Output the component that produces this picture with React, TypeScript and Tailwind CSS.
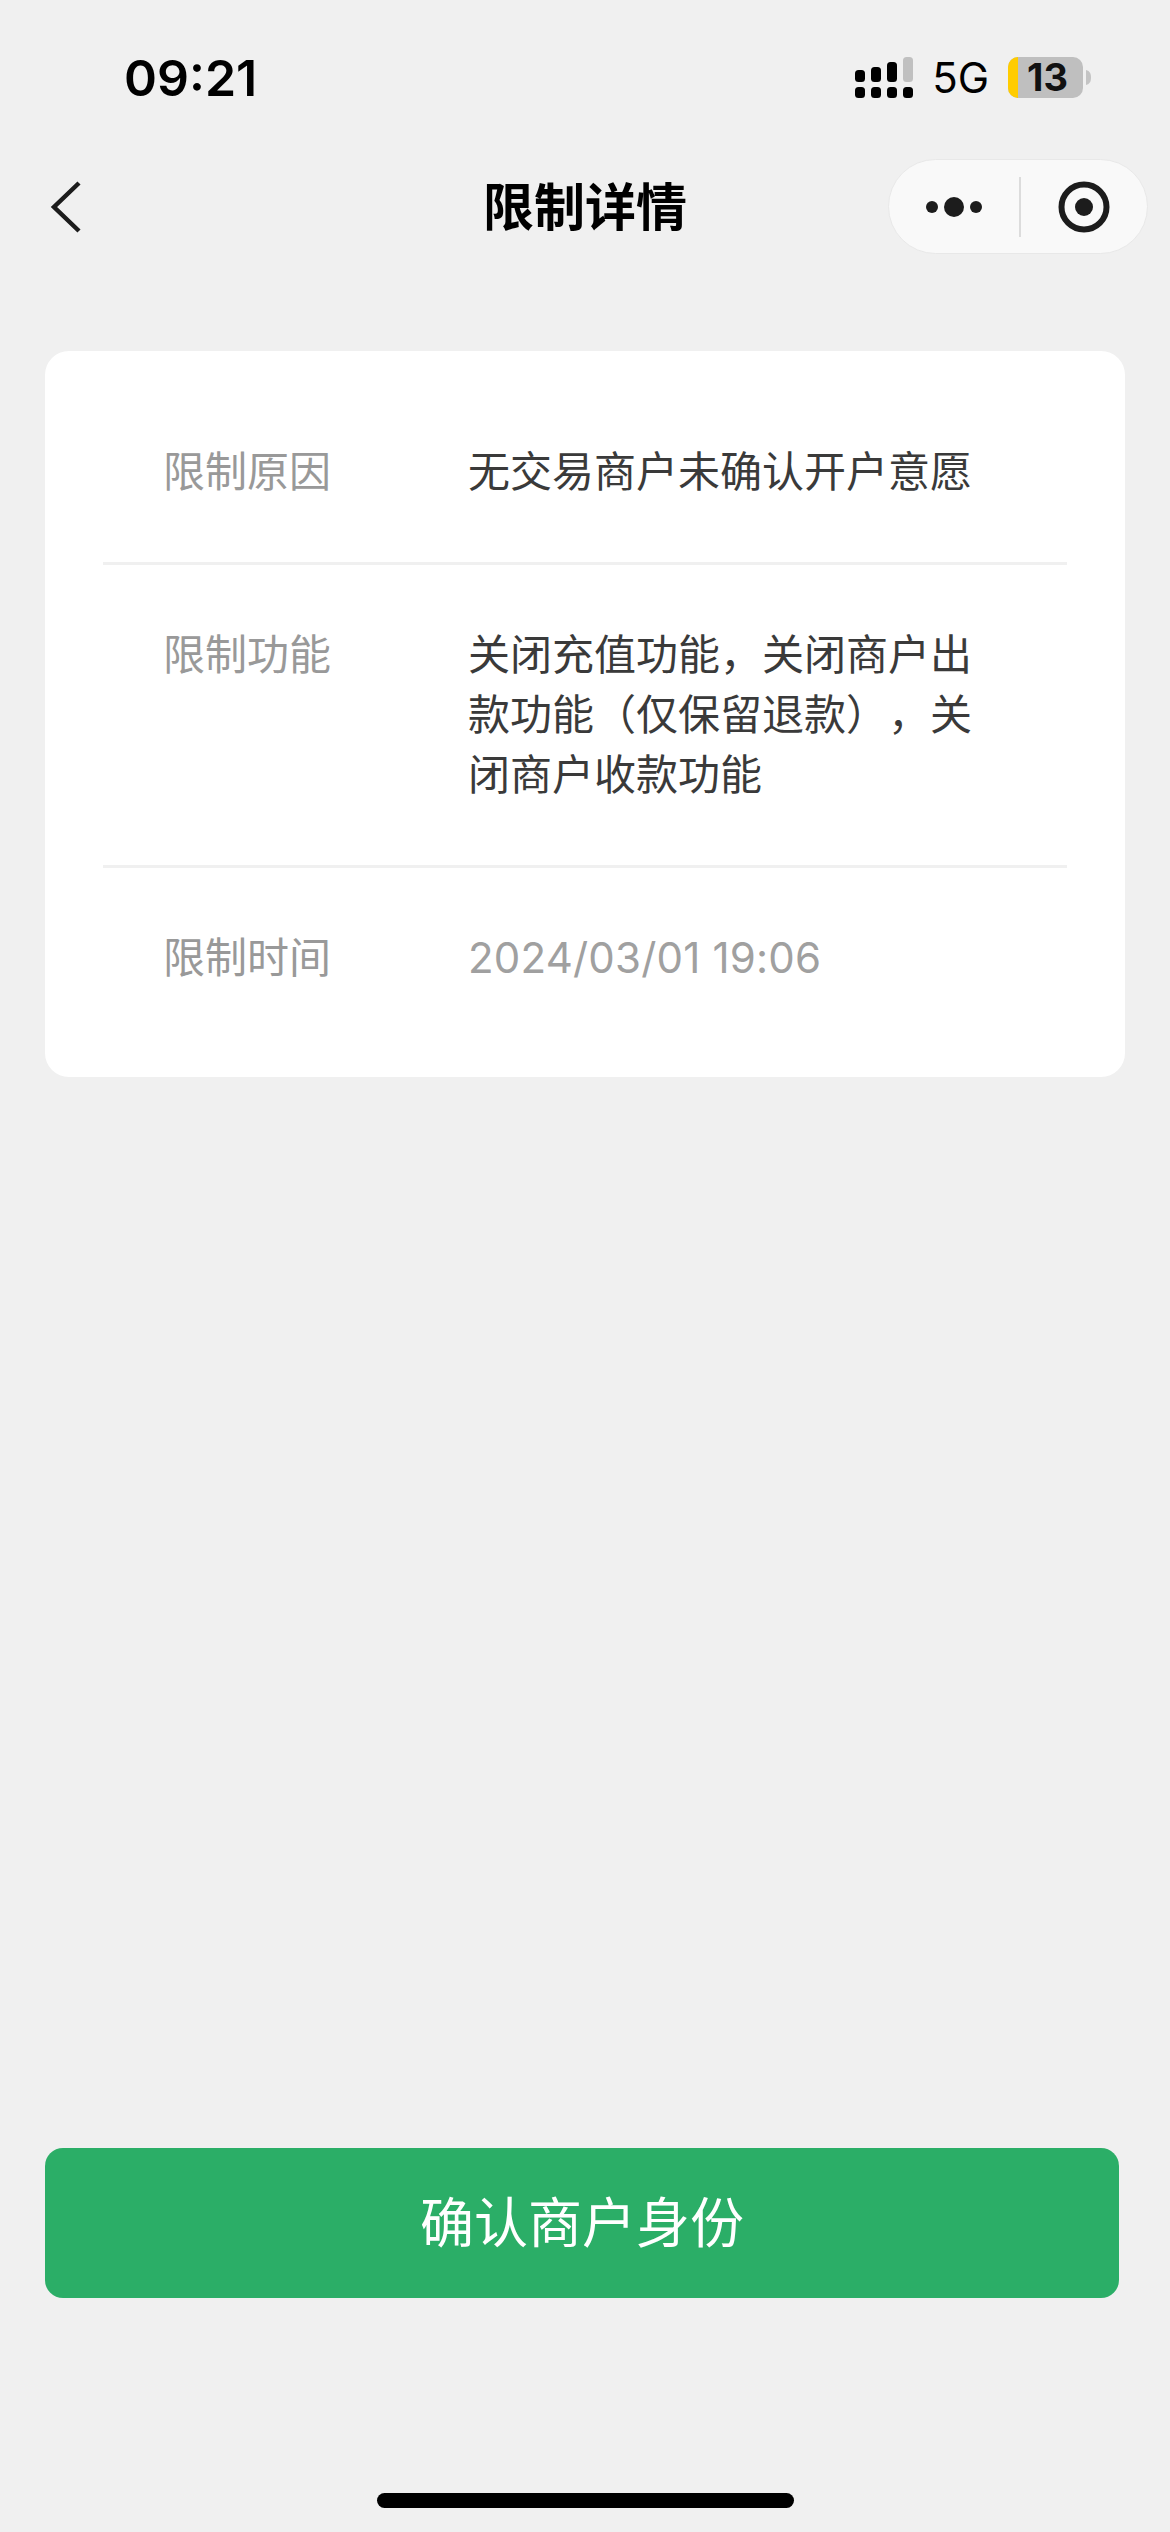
import React from 'react'

const cjk = 'font-["Inter","Noto_Sans_CJK_SC",sans-serif]'

const SignalIcon = () => (
  <svg width="58" height="41" viewBox="0 0 58 41" fill="#000">
    <rect x="0" y="13" width="10" height="12" rx="3.5" />
    <rect x="16" y="10" width="10" height="15" rx="3.5" />
    <rect x="32" y="5" width="10" height="20" rx="3.5" />
    <rect x="48" y="0" width="10" height="25" rx="3.5" fill="#c0c0c0" />
    <rect x="0" y="30" width="10" height="11" rx="3.5" />
    <rect x="16" y="30" width="10" height="11" rx="3.5" />
    <rect x="32" y="30" width="10" height="11" rx="3.5" />
    <rect x="48" y="30" width="10" height="11" rx="3.5" />
  </svg>
)

const Battery = () => (
  <div className="flex items-center">
    <div className="w-[75px] h-[41px] rounded-[10px] bg-[#bfbfbf] flex">
      <div className="w-[10px] h-full rounded-l-[10px] bg-[#ffcc00]" />
      <span className='flex-1 text-center pr-[6px] text-[38px] leading-[41px] font-bold text-[#111] font-["Inter",sans-serif]'>13</span>
    </div>
    <svg width="5" height="15" viewBox="0 0 5 15" className="ml-[3px]">
      <path d="M0 0 C4 1 5 4 5 7.5 C5 11 4 14 0 15 Z" fill="#c4c4c4" />
    </svg>
  </div>
)

const MoreIcon = () => (
  <svg width="60" height="24" viewBox="0 0 60 24" fill="#1c1c1c">
    <circle cx="7" cy="12" r="6" />
    <circle cx="29" cy="12" r="10" />
    <circle cx="51" cy="12" r="6" />
  </svg>
)

const CloseIcon = () => (
  <svg width="52" height="52" viewBox="0 0 52 52">
    <circle cx="26" cy="26" r="22.5" fill="none" stroke="#1c1c1c" strokeWidth="6" />
    <circle cx="26" cy="26" r="9" fill="#1c1c1c" />
  </svg>
)

interface RowProps {
  label: string
  value: string
  muted?: boolean
  last?: boolean
}

const Row: React.FC<RowProps> = ({ label, value, muted, last }) => (
  <div className={last ? 'flex py-[60px]' : 'flex py-[60px] border-b-[3px] border-[#f0f0f0]'}>
    <div className="w-[365px] pl-[60px] shrink-0 text-[#999999]">{label}</div>
    <div className={muted ? 'w-[510px] text-[#a0a0a0] tracking-[0.2px]' : 'w-[510px] text-[#3a3a3a] [text-spacing-trim:space-all]'}>{value}</div>
  </div>
)

export default function App() {
  return (
    <div className={`w-[1170px] h-[2532px] bg-[#f0f0f0] flex flex-col ${cjk}`}>
      <div className="h-[159px] flex items-start justify-between pt-[52px] pl-[124px] pr-[79px]">
        <span className='text-[50px] leading-[52px] font-semibold text-black font-["Inter",sans-serif]'>09:21</span>
        <div className="flex items-center pt-[5px]">
          <SignalIcon />
          <span className='ml-[19px] mr-[19px] text-[42px] leading-[41px] text-black font-["Inter",sans-serif]'>5G</span>
          <Battery />
        </div>
      </div>

      <div className="h-[95px] grid grid-cols-[282px_1fr_282px] items-center">
        <div className="pl-[50px]">
          <svg width="32" height="54" viewBox="0 0 32 54" fill="none" stroke="#1c1c1c" strokeWidth="4.5">
            <path d="M29 3 L4 27 L29 51" />
          </svg>
        </div>
        <h1 className="text-center pt-[2px] text-[51px] leading-[60px] font-bold text-black">限制详情</h1>
        <div className="justify-self-end mr-[22px] w-[260px] h-[95px] rounded-full bg-[#f9f9f9] border border-[#e8e8e8] flex items-center">
          <div className="w-[130px] flex justify-center pl-[2px]">
            <MoreIcon />
          </div>
          <div className="w-[2px] h-[60px] bg-[#dcdcdc]" />
          <div className="flex-1 flex justify-center">
            <CloseIcon />
          </div>
        </div>
      </div>

      <div className="mt-[97px] ml-[45px] w-[1080px] bg-white rounded-[24px] px-[58px] pt-[31px] pb-[29px] text-[42px] leading-[60px]">
        <Row label="限制原因" value="无交易商户未确认开户意愿" />
        <Row label="限制功能" value="关闭充值功能，关闭商户出款功能（仅保留退款），关闭商户收款功能" />
        <Row label="限制时间" value="2024/03/01 19:06" muted last />
      </div>

      <button className="mt-auto ml-[45px] w-[1074px] h-[150px] rounded-[18px] bg-[#2bae67] text-white text-[54px]">
        确认商户身份
      </button>

      <div className="mt-[195px] mb-[24px] ml-[377px] w-[417px] h-[15px] rounded-full bg-black" />
    </div>
  )
}
